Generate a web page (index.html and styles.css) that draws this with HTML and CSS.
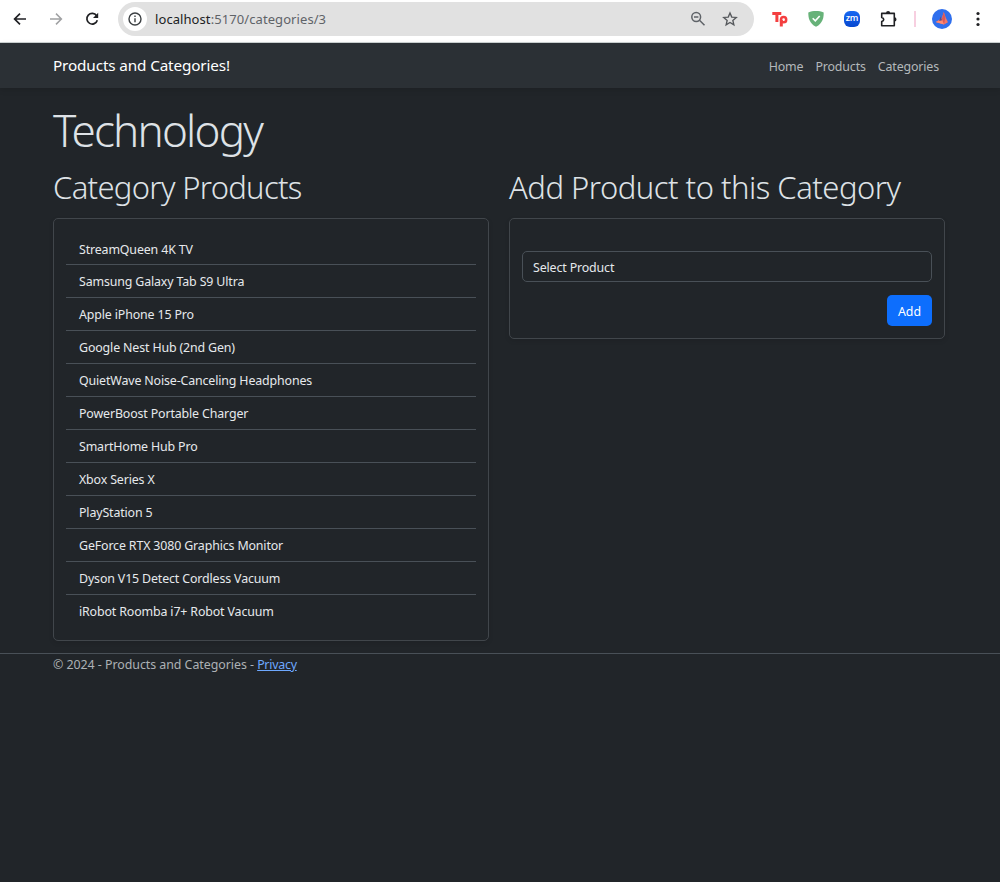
FILE: index.html
```html
<!DOCTYPE html>
<html lang="en">
<head>
<meta charset="utf-8">
<title>Technology</title>
<link rel="stylesheet" href="styles.css">
</head>
<body>
<div class="browser">
  <svg class="nav-icon" viewBox="0 0 16 16"><path d="M14 8H3M8 2.6 2.6 8 8 13.4" fill="none" stroke="#202124" stroke-width="1.7"/></svg>
  <svg class="nav-icon" viewBox="0 0 16 16"><path d="M2 8h11M8 2.6 13.4 8 8 13.4" fill="none" stroke="#a0a1a3" stroke-width="1.5"/></svg>
  <svg class="nav-icon" viewBox="0 0 16 16"><path d="M12.6 4.8A5.3 5.3 0 1 0 13.3 9.2" fill="none" stroke="#202124" stroke-width="1.7"/><path d="M14.2 1.8V7H9z" fill="#202124"/></svg>
  <div class="address">
    <span class="info"><svg width="16" height="16" viewBox="0 0 16 16"><circle cx="8" cy="8" r="6" fill="none" stroke="#3c4043" stroke-width="1.4"/><path d="M8 7.2v4M8 4.5v1.5" stroke="#3c4043" stroke-width="1.4"/></svg></span>
    <span class="url"><span class="host">localhost</span>:5170/categories/3</span>
    <svg class="zoom" width="16" height="16" viewBox="0 0 16 16"><g fill="none" stroke="#5f6368" stroke-width="1.5"><circle cx="6.2" cy="6" r="4.4"/><path d="M9.5 9.3l5 5M4 6h4.4"/></g></svg>
    <svg class="star" width="16" height="16" viewBox="0 0 16 16"><path d="M8 1.9l1.75 4.15 4.5.4-3.4 2.95 1 4.4L8 11.45 4.15 13.8l1-4.4-3.4-2.95 4.5-.4z" fill="none" stroke="#55585c" stroke-width="1.35"/></svg>
  </div>
  <div class="extensions">
    <svg width="18" height="18" viewBox="0 0 18 18"><g fill="none" stroke="#f43f40" stroke-width="3"><path d="M1.3 3.5h9M5.9 3v9"/><path d="M10.3 16.5V9.8"/><circle cx="12.6" cy="9.7" r="2.6" stroke-width="2.5"/></g></svg>
    <svg width="18" height="18" viewBox="0 0 18 18"><path d="M9 1c2.8 0 5.1.5 7.7 1.4 0 5.5-.8 10.5-7.7 14.4C2.1 12.9 1.3 7.9 1.3 2.4 3.9 1.500 6.2 1 9 1z" fill="#67b279"/><path d="M5.7 8.3l2.6 2.6 4.4-4.9" fill="none" stroke="#fff" stroke-width="1.6"/></svg>
    <span class="zm">zm</span>
    <svg class="puzzle" width="18" height="18" viewBox="0 0 18 18"><path d="M2.7 3.4H15.300v12.300H2.700v-4.200c2.700-.8 2.700-3.200 0-4z" fill="none" stroke="#202124" stroke-width="1.6" stroke-linejoin="round"/><path d="M7 3.200a2.100 2.300 0 0 1 4.200 0zM15.500 7.300a2 2.100 0 0 1 0 4.200z" fill="#202124"/></svg>
  </div>
  <span class="divider"></span>
  <svg class="avatar" width="20" height="20" viewBox="0 0 20 20"><circle cx="10" cy="10" r="10" fill="#2f6fed"/><path d="M11.8 3l2 5.800 2.200 4.500-4 2.200-8.300-2.600 6-3.600z" fill="#f47768"/><path d="M11.800 3l-1.800 7 2 5.500 1.300-6.500z" fill="#d8595c"/><path d="M3.700 12.900l6.300-2 2 4.600z" fill="#ff8b74"/><path d="M8.500 7.500l1.600 3.700-3 .8z" fill="#5d4d84"/></svg>
  <svg class="more" width="6" height="16" viewBox="0 0 6 16"><g fill="#202124"><circle cx="3" cy="2.5" r="1.6"/><circle cx="3" cy="8" r="1.6"/><circle cx="3" cy="13.5" r="1.6"/></g></svg>
</div>
<header class="navbar">
  <span class="brand">Products and Categories!</span>
  <nav class="links"><span>Home</span><span>Products</span><span>Categories</span></nav>
</header>
<main class="container">
  <h1 class="title">Technology</h1>
  <div class="columns">
    <section class="column">
      <h2 class="heading heading-list">Category Products</h2>
      <ul class="card list">
        <li>StreamQueen 4K TV</li>
        <li>Samsung Galaxy Tab S9 Ultra</li>
        <li>Apple iPhone 15 Pro</li>
        <li>Google Nest Hub (2nd Gen)</li>
        <li>QuietWave Noise-Canceling Headphones</li>
        <li>PowerBoost Portable Charger</li>
        <li>SmartHome Hub Pro</li>
        <li>Xbox Series X</li>
        <li>PlayStation 5</li>
        <li>GeForce RTX 3080 Graphics Monitor</li>
        <li>Dyson V15 Detect Cordless Vacuum</li>
        <li>iRobot Roomba i7+ Robot Vacuum</li>
      </ul>
    </section>
    <section class="column">
      <h2 class="heading">Add Product to this Category</h2>
      <div class="card form">
        <div class="select">Select Product</div>
        <button class="add">Add</button>
      </div>
    </section>
  </div>
</main>
<footer class="footer"><span>© 2024 - Products and Categories - </span><a class="privacy">Privacy</a></footer>
</body>
</html>
```
FILE: styles.css
```css
* { box-sizing: border-box; }
body {
  margin: 0;
  min-height: 882px;
  background: #212529;
  color: #e6e9ec;
  font: 12.4px/20px "Noto Sans", "Open Sans", sans-serif;
  letter-spacing: -0.14px;
}
svg { display: block; flex: none; }
.browser {
  height: 43px;
  padding: 2px 19px 6px 12px;
  background: #fff;
  border-bottom: 1px solid #cdd3d3;
  display: flex;
  align-items: center;
}
.nav-icon { width: 16px; height: 16px; margin-right: 20px; }
.address {
  width: 636px;
  height: 34px;
  margin-left: -2px;
  padding: 0 16px 0 5px;
  border-radius: 17px;
  background: #e1e1e1;
  display: flex;
  align-items: center;
}
.info {
  width: 24px;
  height: 24px;
  border-radius: 50%;
  background: #fff;
  display: grid;
  place-items: center;
}
.url { margin-left: 8px; color: #5f6368; font-size: 13px; letter-spacing: .08px; }
.host { color: #202124; }
.zoom { margin-left: auto; }
.star { margin-left: 16px; }
.extensions { display: flex; gap: 18px; margin-left: 17px; }
.zm {
  width: 16px;
  height: 16px;
  margin: 1px;
  border-radius: 6px;
  background: linear-gradient(#1768f2, #0747cf);
  color: #fff;
  font: 600 9px/14px "Open Sans", sans-serif;
  letter-spacing: -.2px;
  text-align: center;
}
.divider { width: 2px; height: 16px; margin-left: 17px; background: #f7cfe0; }
.avatar { margin-left: 16px; }
.more { margin-left: auto; }
.navbar {
  height: 45px;
  padding: 0 61px 0 53px;
  background: #2b3035;
  box-shadow: 0 2px 6px rgba(0, 0, 0, .12);
  display: flex;
  align-items: center;
  justify-content: space-between;
}
.brand { color: #fff; font-size: 15.3px; padding-bottom: 1px; }
.links { display: flex; gap: 12px; color: #b4b8bb; padding-top: 2px; }
.container { padding: 14px 55px 0 53px; }
.title, .heading { margin: 0; color: #dee2e6; font-weight: 300; white-space: nowrap; }
.title { font-size: 44px; line-height: 56px; height: 63px; letter-spacing: -1.8px; }
.heading { font-size: 31px; line-height: 44px; height: 53px; letter-spacing: -.5px; }
.heading-list { letter-spacing: -.68px; }
.columns { display: grid; grid-template-columns: 436px 436px; gap: 20px; align-items: start; }
.card {
  margin: 0;
  padding: 13px 12px 12px;
  border: 1px solid #41464b;
  border-radius: 5px;
  box-shadow: 0 2px 5px rgba(0, 0, 0, .1);
}
.list { list-style: none; height: 423px; }
.list li { height: 33px; padding: 0 13px; line-height: 33px; border-bottom: 1px solid #495057; }
.list li:first-child { line-height: 35px; }
.list li:last-child { border: 0; }
.form { height: 121px; padding: 32px 12px 12px; display: flex; flex-direction: column; gap: 13px; }
.select { height: 31px; padding: 0 10px; border: 1px solid #495057; border-radius: 5px; line-height: 31px; }
.add {
  width: 45px;
  height: 31px;
  padding: 2px 0 0;
  border: 0;
  border-radius: 5px;
  background: #0d6efd;
  color: #fff;
  font: inherit;
  align-self: flex-end;
}
.footer { margin-top: 12px; padding: 1px 53px; border-top: 1px solid #495057; color: #adb1b5; white-space: pre; letter-spacing: -.04px; }
.privacy { color: #6ea8fe; text-decoration: underline; letter-spacing: -.25px; }
```
